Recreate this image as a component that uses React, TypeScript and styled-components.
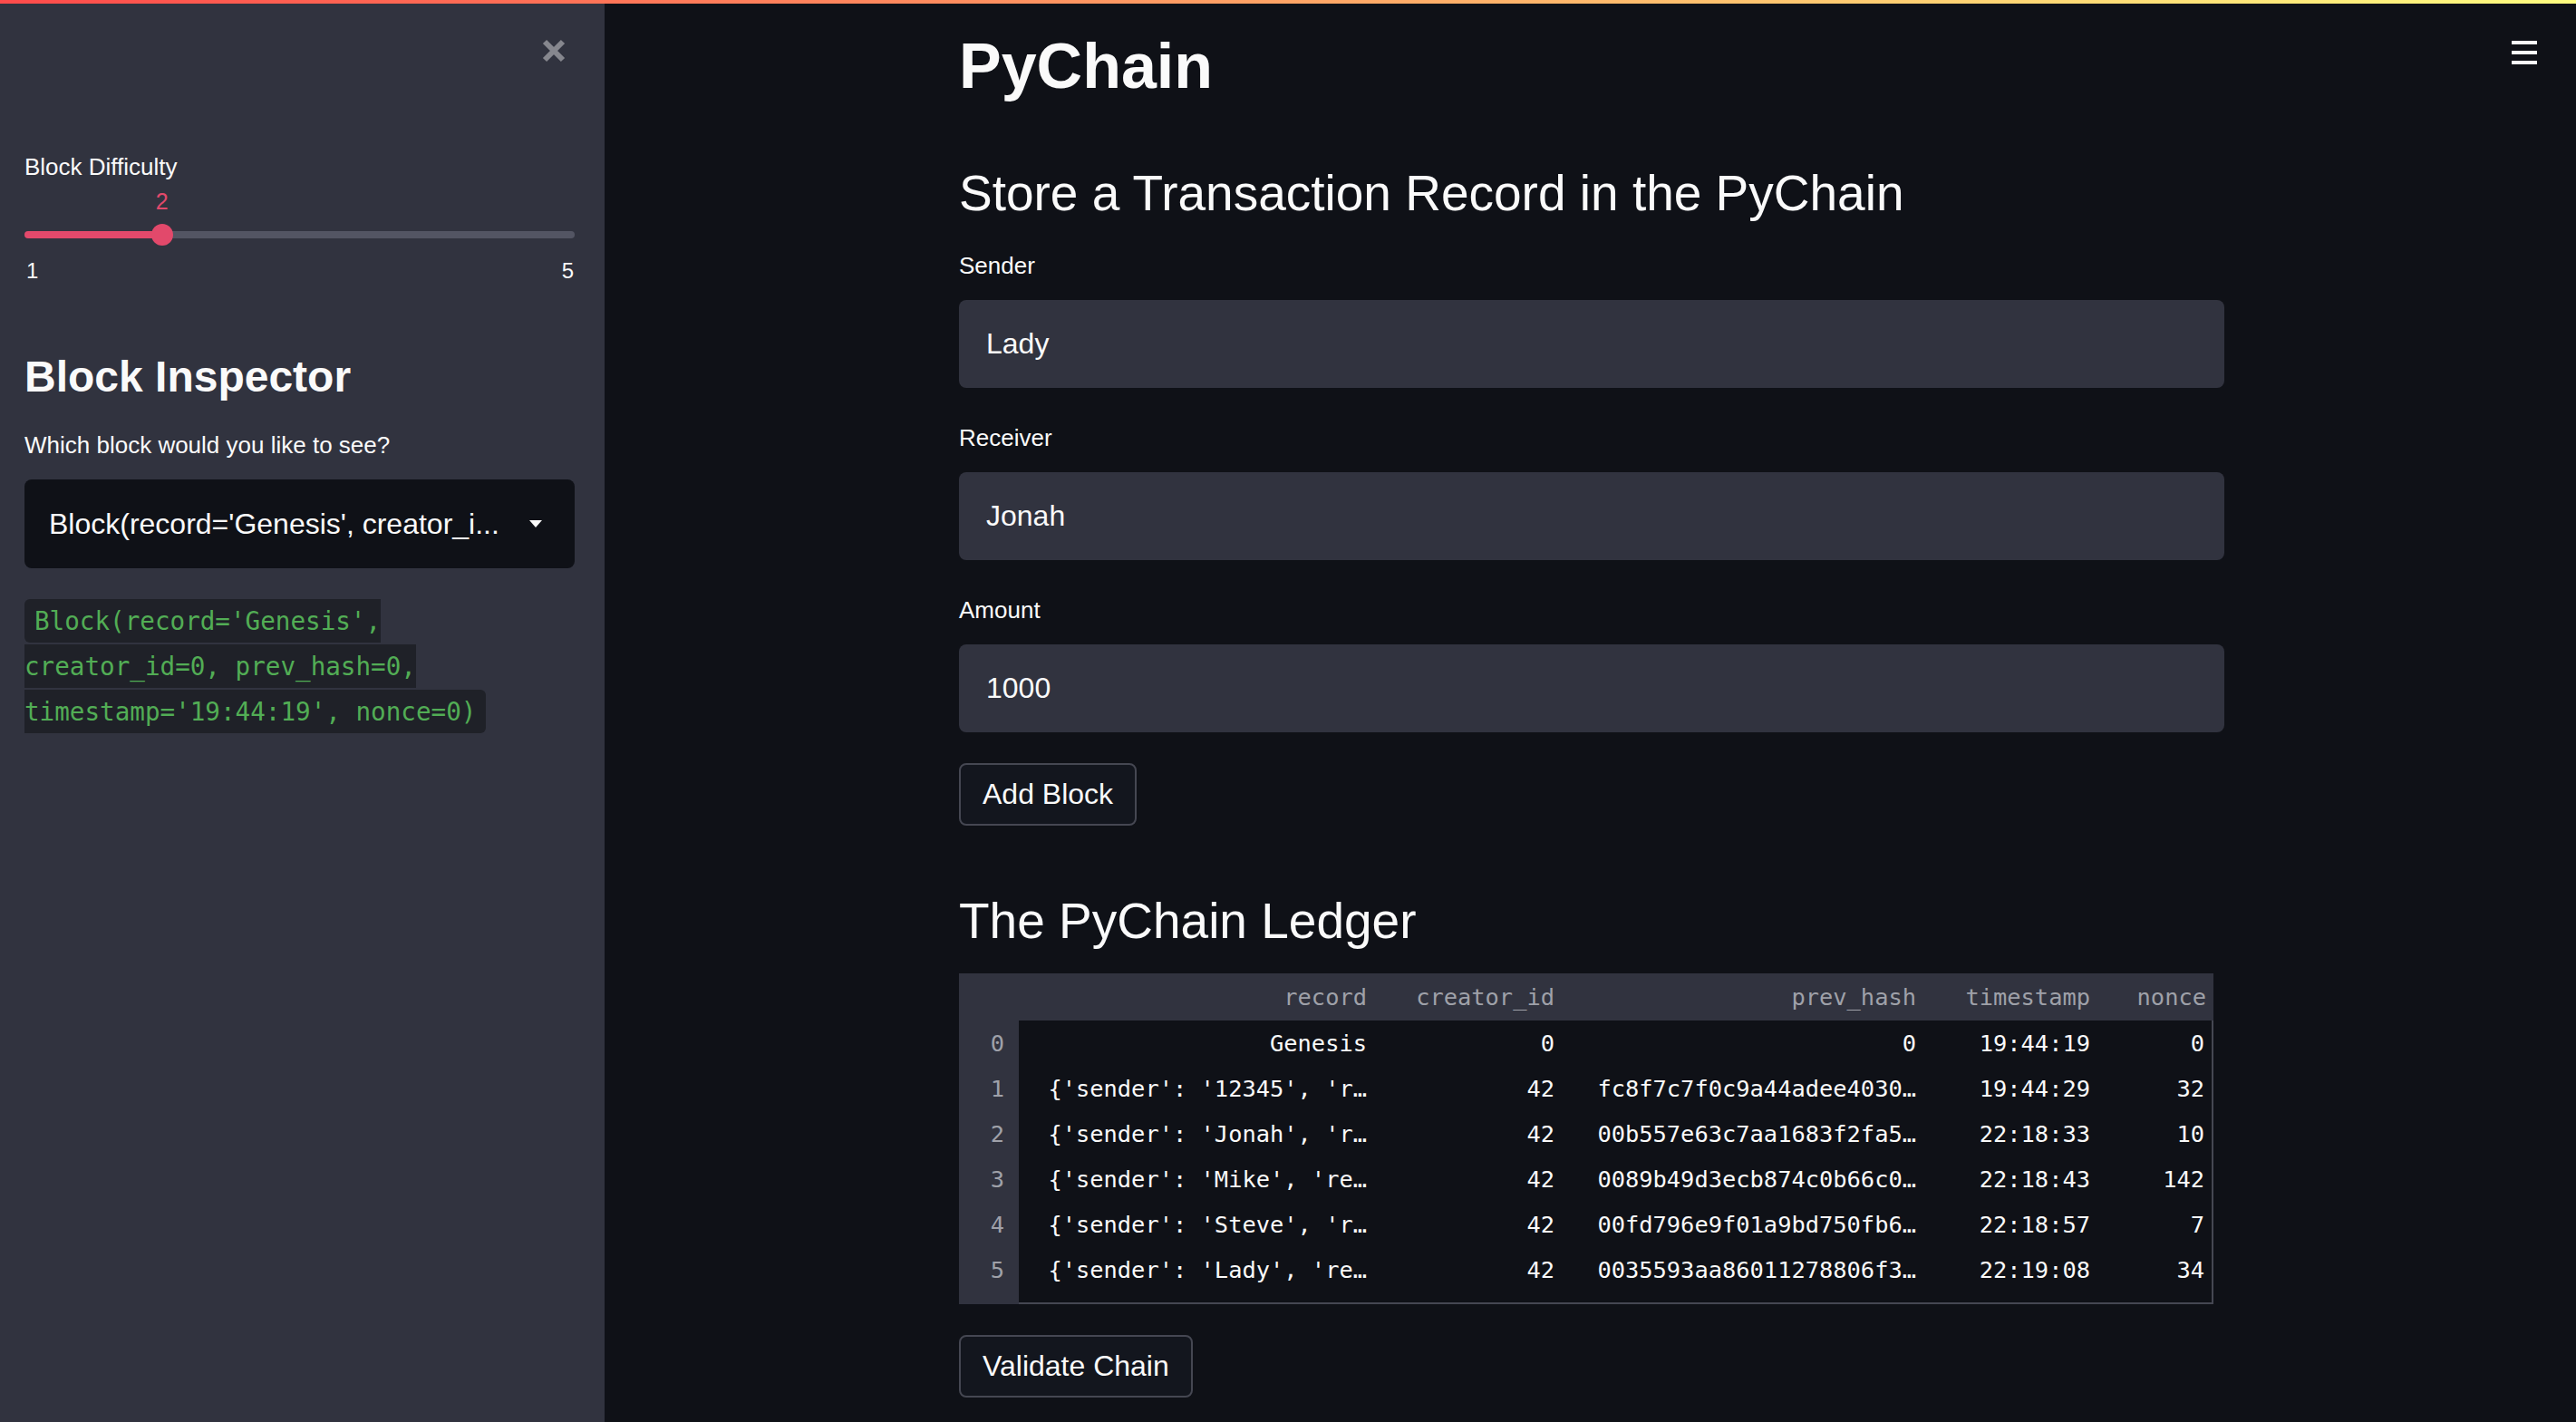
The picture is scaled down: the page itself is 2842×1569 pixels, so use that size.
import React from "react";
import styled, { createGlobalStyle } from "styled-components";

const C = {
  bg: "#0f1117",
  panel: "#31333f",
  text: "#fafafa",
  red: "#e2496b",
  track: "#535563",
  muted: "#9fa1a9",
  codeBg: "#1f2128",
  green: "#52ad55",
  border: "#454752",
  buttonBg: "#13161e",
  icon: "#86878e",
};

const sans = `"Liberation Sans", Arial, sans-serif`;
const mono = `"DejaVu Sans Mono", "Liberation Mono", monospace`;

const GlobalStyle = createGlobalStyle`
  html, body { margin: 0; padding: 0; background: ${C.bg}; }
  body { font-family: ${sans}; color: ${C.text}; }
  * { box-sizing: border-box; }
`;

const Page = styled.div`
  display: flex;
  height: 100vh;
  min-height: 1569px;
  background: ${C.bg};
  overflow: hidden;
`;

const Decoration = styled.div`
  position: fixed;
  top: 0;
  left: 0;
  right: 0;
  height: 4px;
  background: linear-gradient(90deg, #ff4b4b, #fffd80);
  z-index: 10;
`;

/* ---------- Sidebar ---------- */

const Sidebar = styled.aside`
  width: 667px;
  flex: none;
  background: ${C.panel};
  padding: 0 33px 0 27px;
  display: flex;
  flex-direction: column;
`;

const CloseRow = styled.div`
  display: flex;
  justify-content: flex-end;
  padding-top: 42px;
  margin-right: 9px;
  height: 70px;
`;

const CloseButton = styled.button`
  width: 28px;
  height: 28px;
  padding: 0;
  border: 0;
  background: none;
  display: flex;
  cursor: pointer;
`;

const Label = styled.div<{ $mt?: number }>`
  font-size: 26px;
  line-height: 36px;
  color: ${C.text};
  margin-top: ${(p) => p.$mt ?? 0}px;
`;

const SliderBlock = styled.div`
  margin-top: 5px;
  display: flex;
  flex-direction: column;
`;

const ValueLayer = styled.div`
  position: relative;
  height: 30px;
`;

const ThumbValue = styled.span`
  position: absolute;
  top: 0;
  transform: translateX(-50%);
  font-size: 25px;
  line-height: 30px;
  color: ${C.red};
`;

const TrackArea = styled.div`
  position: relative;
  margin-top: 10px;
  height: 24px;
  display: flex;
  align-items: center;
`;

const Rail = styled.div`
  width: 100%;
  height: 8px;
  border-radius: 4px;
`;

const Thumb = styled.div`
  position: absolute;
  top: 0;
  width: 24px;
  height: 24px;
  border-radius: 50%;
  background: ${C.red};
  transform: translateX(-50%);
`;

const MinMax = styled.div`
  margin-top: 13px;
  display: flex;
  justify-content: space-between;
  font-size: 24px;
  line-height: 30px;
  color: ${C.text};
  padding: 0 1px 0 2px;
`;

const SideHeading = styled.h2`
  margin: 73px 0 0;
  font-size: 48px;
  line-height: 58px;
  font-weight: 700;
  color: ${C.text};
`;

const Select = styled.div`
  margin-top: 20px;
  height: 98px;
  background: ${C.bg};
  border-radius: 8px;
  padding: 0 36px 0 27px;
  display: flex;
  align-items: center;
  justify-content: space-between;
  font-size: 32px;
  color: ${C.text};
`;

const SelectText = styled.span`
  white-space: nowrap;
  overflow: hidden;
`;

const CodeParagraph = styled.p`
  margin: 33px 0 0;
  font-family: ${mono};
  font-size: 27.6px;
  line-height: 50px;
`;

const InlineCode = styled.code`
  font-family: ${mono};
  background: ${C.codeBg};
  color: ${C.green};
  padding: 7.5px 11px 7.5px 11px;
  border-radius: 6px;
  box-decoration-break: slice;
  -webkit-box-decoration-break: slice;
`;

/* ---------- Main ---------- */

const Main = styled.main`
  flex: 1;
  position: relative;
  display: flex;
  justify-content: center;
  padding-left: 3px;
`;

const Menu = styled.button`
  position: absolute;
  top: 45px;
  right: 43px;
  width: 28px;
  padding: 0;
  border: 0;
  background: none;
  display: flex;
  flex-direction: column;
  gap: 7px;
  cursor: pointer;
`;

const MenuBar = styled.span`
  display: block;
  height: 4px;
  background: ${C.text};
`;

const Content = styled.div`
  width: 1396px;
  padding-top: 31px;
  display: flex;
  flex-direction: column;
  align-items: flex-start;
`;

const Title = styled.h1`
  margin: 0;
  font-size: 70px;
  line-height: 84px;
  font-weight: 700;
  color: ${C.text};
`;

const Heading = styled.h2<{ $mt: number }>`
  margin: ${(p) => p.$mt}px 0 0;
  font-size: 55px;
  line-height: 66px;
  font-weight: 400;
  color: ${C.text};
`;

const Field = styled.div<{ $mt: number }>`
  align-self: stretch;
  margin-top: ${(p) => p.$mt}px;
  display: flex;
  flex-direction: column;
  gap: 20px;
`;

const Input = styled.div`
  height: 97px;
  background: ${C.panel};
  border-radius: 8px;
  padding-left: 30px;
  display: flex;
  align-items: center;
  font-size: 32px;
  color: ${C.text};
`;

const Button = styled.button<{ $mt: number }>`
  margin-top: ${(p) => p.$mt}px;
  height: 69px;
  padding: 0 24px;
  border: 2px solid ${C.border};
  border-radius: 8px;
  background: ${C.buttonBg};
  color: ${C.text};
  font-family: ${sans};
  font-size: 32px;
  cursor: pointer;
`;

const Table = styled.div`
  margin-top: 25px;
  width: 1384px;
  background: ${C.panel};
  font-family: ${mono};
  font-size: 25.4px;
`;

const COLS = "392px 207px 399px 192px 1fr";

const HeaderRow = styled.div`
  display: grid;
  grid-template-columns: 66px ${COLS};
  height: 52px;
  align-items: center;
  color: ${C.muted};
`;

const Cell = styled.div`
  text-align: right;
  padding-right: 8px;
  white-space: nowrap;
  overflow: hidden;
`;

const Body = styled.div`
  display: flex;
`;

const IndexColumn = styled.div`
  width: 66px;
  flex: none;
  padding-bottom: 13px;
  color: ${C.muted};
`;

const IndexCell = styled.div`
  height: 50px;
  line-height: 50px;
  text-align: right;
  padding-right: 16px;
`;

const DataColumn = styled.div`
  flex: 1;
  background: ${C.bg};
  border-right: 2px solid ${C.border};
  border-bottom: 2px solid ${C.border};
  padding-bottom: 11px;
  color: ${C.text};
`;

const DataRow = styled.div`
  display: grid;
  grid-template-columns: ${COLS};
  height: 50px;
  align-items: center;
`;

const headers = ["record", "creator_id", "prev_hash", "timestamp", "nonce"];

const rows: string[][] = [
  ["Genesis", "0", "0", "19:44:19", "0"],
  ["{'sender': '12345', 'r…", "42", "fc8f7c7f0c9a44adee4030…", "19:44:29", "32"],
  ["{'sender': 'Jonah', 'r…", "42", "00b557e63c7aa1683f2fa5…", "22:18:33", "10"],
  ["{'sender': 'Mike', 're…", "42", "0089b49d3ecb874c0b66c0…", "22:18:43", "142"],
  ["{'sender': 'Steve', 'r…", "42", "00fd796e9f01a9bd750fb6…", "22:18:57", "7"],
  ["{'sender': 'Lady', 're…", "42", "0035593aa86011278806f3…", "22:19:08", "34"],
];

const fields = [
  { label: "Sender", value: "Lady", mt: 29 },
  { label: "Receiver", value: "Jonah", mt: 37 },
  { label: "Amount", value: "1000", mt: 37 },
];

const CloseIcon = () => (
  <svg width="28" height="28" viewBox="0 0 28 28">
    <path d="M4 4 L24 24 M24 4 L4 24" stroke={C.icon} strokeWidth="6" fill="none" />
  </svg>
);

const Caret = () => (
  <svg width="14" height="8" viewBox="0 0 14 8">
    <path d="M0 0 H14 L7 8 Z" fill={C.text} />
  </svg>
);

const DifficultySlider = ({ min, max, value }: { min: number; max: number; value: number }) => {
  const pct = ((value - min) / (max - min)) * 100;
  return (
    <SliderBlock>
      <ValueLayer>
        <ThumbValue style={{ left: `${pct}%` }}>{value}</ThumbValue>
      </ValueLayer>
      <TrackArea>
        <Rail
          style={{
            background: `linear-gradient(90deg, ${C.red} ${pct}%, ${C.track} ${pct}%)`,
          }}
        />
        <Thumb style={{ left: `${pct}%` }} />
      </TrackArea>
      <MinMax>
        <span>{min}</span>
        <span>{max}</span>
      </MinMax>
    </SliderBlock>
  );
};

export default function App() {
  return (
    <>
      <GlobalStyle />
      <Decoration />
      <Page>
        <Sidebar>
          <CloseRow>
            <CloseButton aria-label="Close sidebar">
              <CloseIcon />
            </CloseButton>
          </CloseRow>
          <Label $mt={96}>Block Difficulty</Label>
          <DifficultySlider min={1} max={5} value={2} />
          <SideHeading>Block Inspector</SideHeading>
          <Label $mt={28}>Which block would you like to see?</Label>
          <Select>
            <SelectText>Block(record='Genesis', creator_i...</SelectText>
            <Caret />
          </Select>
          <CodeParagraph>
            <InlineCode>
              Block(record='Genesis', creator_id=0, prev_hash=0, timestamp='19:44:19', nonce=0)
            </InlineCode>
          </CodeParagraph>
        </Sidebar>
        <Main>
          <Menu aria-label="Menu">
            <MenuBar />
            <MenuBar />
            <MenuBar />
          </Menu>
          <Content>
            <Title>PyChain</Title>
            <Heading $mt={65}>Store a Transaction Record in the PyChain</Heading>
            {fields.map((f) => (
              <Field key={f.label} $mt={f.mt}>
                <Label>{f.label}</Label>
                <Input>{f.value}</Input>
              </Field>
            ))}
            <Button $mt={34}>Add Block</Button>
            <Heading $mt={72}>The PyChain Ledger</Heading>
            <Table>
              <HeaderRow>
                <Cell />
                {headers.map((h) => (
                  <Cell key={h}>{h}</Cell>
                ))}
              </HeaderRow>
              <Body>
                <IndexColumn>
                  {rows.map((_, i) => (
                    <IndexCell key={i}>{i}</IndexCell>
                  ))}
                </IndexColumn>
                <DataColumn>
                  {rows.map((r, i) => (
                    <DataRow key={i}>
                      {r.map((v, j) => (
                        <Cell key={j}>{v}</Cell>
                      ))}
                    </DataRow>
                  ))}
                </DataColumn>
              </Body>
            </Table>
            <Button $mt={34}>Validate Chain</Button>
          </Content>
        </Main>
      </Page>
    </>
  );
}
